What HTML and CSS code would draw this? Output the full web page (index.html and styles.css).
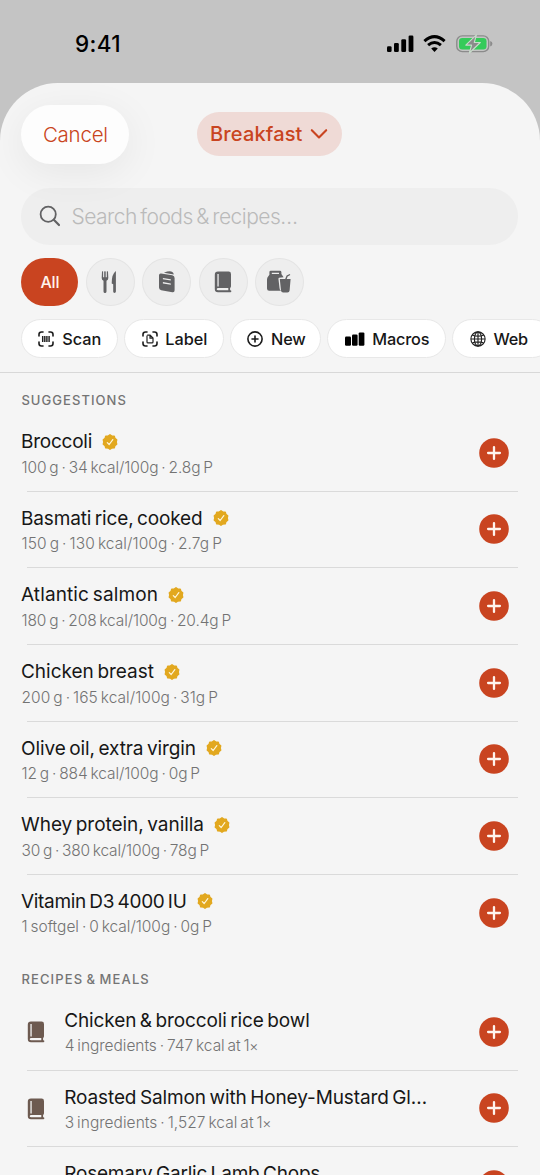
FILE: index.html
```html
<!DOCTYPE html>
<html lang="en">
<head>
<meta charset="utf-8">
<title>Add food</title>
<link rel="stylesheet" href="styles.css">
</head>
<body>
<svg class="defs" aria-hidden="true">
  <symbol id="badge" viewBox="0 0 16 16">
    <path fill="#e2a81f" stroke="#e2a81f" stroke-width="1.6" stroke-linejoin="round" d="M8 .9 9.8 2.1 12.2 2.2 12.8 4.4 14.6 5.8 14.1 8 14.6 10.2 12.8 11.6 12.2 13.8 9.8 13.9 8 15.1 6.2 13.9 3.8 13.8 3.2 11.6 1.4 10.2 1.9 8 1.4 5.8 3.2 4.4 3.8 2.2 6.2 2.1Z"/>
    <path fill="none" stroke="#fff6dc" stroke-width="1.2" stroke-linecap="round" stroke-linejoin="round" d="M5.3 8.6 7.2 10.5 10.8 5.6"/>
  </symbol>
  <symbol id="book" viewBox="0 0 18 22">
    <path fill="currentColor" fill-rule="evenodd" d="M4 .6H14.6Q17 .6 17 3V15.2Q17 16.6 16.1 16.9V19.3H16.4A.9.9 0 0 1 16.4 21.2H4Q.8 21.2 .8 18V3.8Q.8 .6 4 .6ZM3.4 3V15.6H4.7V3ZM4.3 17.1Q2.7 17.1 2.7 18.2T4.3 19.3H14.3V17.1Z"/>
  </symbol>
  <symbol id="plus" viewBox="0 0 30 30">
    <circle cx="15" cy="15" r="14.8" fill="#c94420"/>
    <path d="M15 9.1V20.9M9.1 15H20.9" fill="none" stroke="#fff4ee" stroke-width="2.3" stroke-linecap="round"/>
  </symbol>
</svg>

<header class="status">
  <span class="time" data-w="46">9:41</span>
  <svg class="status-icons" width="108" height="20" viewBox="0 0 108 20">
    <g><rect x="1" y="12.3" width="4.6" height="5.7" rx="1.3"/><rect x="8" y="9" width="4.8" height="9" rx="1.3"/><rect x="15.3" y="5.3" width="4.8" height="12.7" rx="1.3"/><rect x="22.6" y="1.5" width="4.8" height="16.5" rx="1.3"/></g>
    <g fill="none" stroke="#000" stroke-width="3"><path d="M38.4 7.1Q48.5-1.9 58.6 7.1"/><path d="M42.1 11.2Q48.5 5.7 54.9 11.2"/></g>
    <path d="M45.2 14.4Q48.5 11.9 51.8 14.4L48.5 17.9Z"/>
    <rect x="70.8" y="1.9" width="31.9" height="15.7" rx="5.4" fill="none" stroke="#8b8b8b" stroke-width="1.4"/>
    <rect x="73" y="4" width="27.5" height="11.5" rx="3.3" fill="#35cb5a"/>
    <path d="M104.2 7Q106.4 7.6 106.4 9.8T104.2 12.6Z" fill="#8b8b8b"/>
    <path d="M90.4 .9 79.8 11.1H85.6L83.4 19 94.3 8.5H88.3Z" fill="#8b8b8b" stroke="#c8dccb" stroke-width="1.1" stroke-linejoin="round"/>
  </svg>
</header>

<main class="sheet">
  <div class="toolbar">
    <button class="cancel"><span data-w="65">Cancel</span></button>
    <button class="meal"><span data-w="92.5">Breakfast</span>
      <svg width="18" height="12" viewBox="0 0 18 12"><path d="M1.8 2.2 9 9.5 16.2 2.2" fill="none" stroke="#c94420" stroke-width="2.1" stroke-linecap="round" stroke-linejoin="round"/></svg>
    </button>
  </div>

  <div class="search">
    <svg width="22" height="22" viewBox="0 0 22 22"><g fill="none" stroke="#626264" stroke-width="1.8" stroke-linecap="round"><circle cx="9.2" cy="9.2" r="7.6"/><path d="M14.8 14.8 20 20" stroke-width="2.2"/></g></svg>
    <span data-w="226">Search foods &amp; recipes…</span>
  </div>

  <div class="filters">
    <span class="all"><span data-w="19">All</span></span>
    <span class="round"><svg width="18" height="24" viewBox="0 0 18 24" fill="currentColor"><path d="M1 1.6Q1.6.8 2.1 1.6V7.2H3.2V1.6Q4 .8 4.7 1.6V7.2H5.8V1.6Q6.4.8 7 1.6L7.3 8Q7.3 10 5.5 10.8V21.4Q5.4 23 4 23T2.5 21.4V10.8Q.7 10 .7 8Z"/><path d="M14.9 1V21.6Q14.8 23 13.5 23T12.2 21.6V14.3L10.7 13.5Q10.6 4 14.9 1Z"/></svg></span>
    <span class="round"><svg width="18" height="24" viewBox="0 0 18 24" fill="currentColor"><path fill-rule="evenodd" d="M3 3.4 14.3 5.3Q16.6 5.8 16.6 8V20.2Q16.6 22.6 14.4 22.2L3.2 20.2Q1 19.7 1 17.5V5.2Q1.1 3.2 3 3.4ZM4.9 8V9.3L12.8 10.6V9.3ZM4.9 12.1V13.4L12.8 14.7V13.4Z"/><path d="M5.9 2.7Q11.8.3 14.3 1.9 15.6 2.8 15.8 4.5Z"/></svg></span>
    <span class="round"><svg width="18" height="22"><use href="#book"/></svg></span>
    <span class="round"><svg width="26" height="24" viewBox="0 0 26 24" fill="currentColor"><path fill-rule="evenodd" d="M4.7.7H14Q15.2.7 15.4 2V4.1L17.6 7.3 13 7.8Q12.3 8 12.5 9.4L13.5 18Q13.7 20.8 15.2 20.8H3.2Q1 20.8 1 18.5V9.5Q1 7.8 2.3 6.2L3.4 4.7V2Q3.5.7 4.7.7ZM5.8 2.7V3.9H13V2.7Z"/><path d="M13.8 9H19.2L20.6 5.5 23.8 3.9 24.3 5 21.6 6.4 20.7 9H24.6L23.6 20.5Q23.4 22.6 21.4 22.6H17.2Q15.2 22.6 15 20.5Z"/></svg></span>
  </div>

  <div class="actions">
    <span class="chip scan"><svg width="16" height="16" viewBox="0 0 16 16"><path class="ln" d="M1 5V3.5Q1 1 3.5 1H5M11 1h1.5Q15 1 15 3.5V5M15 11v1.5Q15 15 12.5 15H11M5 15H3.5Q1 15 1 12.5V11"/><path d="M4.7 5V11M6.8 5V11M8.9 5V11M11.1 5V11" stroke="#222" stroke-width="1.45"/></svg><span data-w="39">Scan</span></span>
    <span class="chip label"><svg width="16" height="16" viewBox="0 0 16 16"><path class="ln" d="M1 5V3.5Q1 1 3.5 1H5M11 1h1.5Q15 1 15 3.5V5M15 11v1.5Q15 15 12.5 15H11M5 15H3.5Q1 15 1 12.5V11"/><path d="M5.2 4.1H8.1L11 7V10.9Q11 11.9 10 11.9H6Q5 11.9 5 10.9V4.5M8 4.3V7.2H11" fill="none" stroke="#222" stroke-width="1.2"/></svg><span data-w="42">Label</span></span>
    <span class="chip new"><svg width="16" height="16" viewBox="0 0 16 16"><g class="ln"><circle cx="8" cy="8" r="7.1"/><path d="M8 5V11M5 8H11"/></g></svg><span data-w="34.5">New</span></span>
    <span class="chip macros"><svg width="20" height="16" viewBox="0 0 20 16"><rect x="0" y="5.5" width="6" height="9.2" rx="1.2"/><rect x="7" y="3.5" width="5.6" height="11.2" rx="1.2"/><rect x="13.7" y="1.4" width="5.7" height="13.3" rx="1.2"/></svg><span data-w="57">Macros</span></span>
    <span class="chip web"><svg width="16" height="16" viewBox="0 0 16 16"><g fill="none" stroke="#222" stroke-width="1.15"><circle cx="8" cy="8" r="7.1"/><ellipse cx="8" cy="8" rx="3.6" ry="7.1"/><path d="M8 1V15M1 8H15M2.4 4.2Q8 6.2 13.6 4.2M2.4 11.8Q8 9.8 13.6 11.8"/></g></svg><span data-w="34.5">Web</span></span>
  </div>

  <section class="list">
    <h2><span data-w="105.5">SUGGESTIONS</span></h2>
    <article class="row"><div class="info"><h3><span data-w="71">Broccoli</span><svg><use href="#badge"/></svg></h3><p><span data-w="191.5">100 g · 34 kcal/100g · 2.8g P</span></p></div><svg class="add"><use href="#plus"/></svg></article>
    <article class="row"><div class="info"><h3><span data-w="181.5">Basmati rice, cooked</span><svg><use href="#badge"/></svg></h3><p><span data-w="200.5">150 g · 130 kcal/100g · 2.7g P</span></p></div><svg class="add"><use href="#plus"/></svg></article>
    <article class="row"><div class="info"><h3><span data-w="137">Atlantic salmon</span><svg><use href="#badge"/></svg></h3><p><span data-w="209.5">180 g · 208 kcal/100g · 20.4g P</span></p></div><svg class="add"><use href="#plus"/></svg></article>
    <article class="row"><div class="info"><h3><span data-w="133">Chicken breast</span><svg><use href="#badge"/></svg></h3><p><span data-w="196.5">200 g · 165 kcal/100g · 31g P</span></p></div><svg class="add"><use href="#plus"/></svg></article>
    <article class="row"><div class="info"><h3><span data-w="175">Olive oil, extra virgin</span><svg><use href="#badge"/></svg></h3><p><span data-w="178.5">12 g · 884 kcal/100g · 0g P</span></p></div><svg class="add"><use href="#plus"/></svg></article>
    <article class="row"><div class="info"><h3><span data-w="183">Whey protein, vanilla</span><svg><use href="#badge"/></svg></h3><p><span data-w="187.5">30 g · 380 kcal/100g · 78g P</span></p></div><svg class="add"><use href="#plus"/></svg></article>
    <article class="row"><div class="info"><h3><span data-w="165.5">Vitamin D3 4000 IU</span><svg><use href="#badge"/></svg></h3><p><span data-w="190.5">1 softgel · 0 kcal/100g · 0g P</span></p></div><svg class="add"><use href="#plus"/></svg></article>
  </section>

  <section class="list recipes">
    <h2><span data-w="128.5">RECIPES &amp; MEALS</span></h2>
    <article class="row"><svg class="thumb"><use href="#book"/></svg><div class="info"><h3><span data-w="245.5">Chicken &amp; broccoli rice bowl</span></h3><p><span data-w="185">4 ingredients · 747 kcal at 1</span><small>×</small></p></div><svg class="add"><use href="#plus"/></svg></article>
    <article class="row"><svg class="thumb"><use href="#book"/></svg><div class="info"><h3><span data-w="363">Roasted Salmon with Honey-Mustard Gl…</span></h3><p><span data-w="198">3 ingredients · 1,527 kcal at 1</span><small>×</small></p></div><svg class="add"><use href="#plus"/></svg></article>
    <article class="row"><svg class="thumb"></svg><div class="info"><h3><span data-w="256">Rosemary Garlic Lamb Chops</span></h3></div><svg class="add"><use href="#plus"/></svg></article>
  </section>
</main>
<script src="tracking.js"></script>
</body>
</html>
```
FILE: styles.css
```css
* { box-sizing: border-box; }
html, body { margin: 0; height: 1175px; overflow: hidden; }
body { background: #c4c4c4; font-family: Inter, "Open Sans", sans-serif; color: #171717; display: flex; flex-direction: column; }
.defs { display: none; }
svg { display: block; flex: none; }
[data-w] { white-space: nowrap; flex: none; word-spacing: -0.09em; }
button { font: inherit; border: 0; padding: 0; }

.status { height: 83.4px; flex: none; display: flex; justify-content: space-between; padding: 34px 46px 0 75px; }
.time { font-size: 22.5px; font-weight: 550; line-height: 20px; color: #000; }

.sheet { height: 1091.6px; flex: none; overflow: hidden; background: #f5f5f5; border-radius: 58px 58px 0 0; }
.toolbar { display: flex; align-items: center; height: 104.8px; padding: 0 21.4px; gap: 67.4px; }
.cancel { width: 108px; height: 59px; margin-top: -3px; border-radius: 30px; background: #fdfdfd; box-shadow: 0 8px 40px rgba(0,0,0,.065); color: #c94420; font-size: 20.5px; font-weight: 350; }
.meal { width: 145.5px; height: 44px; margin-top: -3px; border-radius: 22px; background: #efdad6; color: #c94420; font-size: 20px; font-weight: 500; display: flex; align-items: center; gap: 7px; padding-left: 13.3px; }

.search { margin: 0 21.6px 0 21.4px; height: 56.5px; border-radius: 28.5px; background: #eee; display: flex; align-items: center; gap: 10.6px; padding-left: 17.5px; color: #bababa; font-size: 21px; font-weight: 300; }

.filters { display: flex; gap: 7.4px; padding: 13.2px 21.4px 0; }
.all { width: 57px; height: 48.5px; border-radius: 25px; background: #c94420; color: #fff4ee; font-size: 16px; font-weight: 480; display: grid; place-items: center; }
.round { width: 49px; height: 48.5px; border-radius: 50%; background: #eee; border: 1px solid #e4e4e4; color: #626264; display: grid; place-items: center; }

.actions { display: flex; gap: 6.2px; padding: 13px 0 13.5px 21.2px; border-bottom: 1px solid #d8d8d8; }
.chip { height: 39px; flex: none; border: 1px solid #e8e8e8; border-radius: 20px; background: #fff; display: flex; align-items: center; gap: 7.7px; padding-left: 16.3px; font-size: 16.3px; font-weight: 480; }
.ln { fill: none; stroke: #1c1c1c; stroke-width: 1.6; stroke-linecap: round; }
.scan { width: 97px; }
.label { width: 99.5px; }
.new { width: 91px; }
.macros { width: 119px; }
.web { width: 100px; }

.list h2 { margin: 0; height: 42.4px; padding: 18.2px 0 0 21.4px; font-size: 13px; line-height: 18px; font-weight: 500; color: #747474; }
.row { height: 76.62px; margin: 0 22px 0 21px; display: flex; align-items: center; padding-right: 9.2px; background: linear-gradient(#dadada, #dadada) 5.5px 100% / 100% 1px no-repeat; }
.list:not(.recipes) .row:last-child { background: none; }
.info { flex: 1; align-self: flex-start; padding-top: 13.5px; }
.info h3 { margin: 0; height: 26px; display: flex; align-items: center; gap: 10px; font-size: 19px; font-weight: 400; }
.info h3 svg { width: 16px; height: 16px; }
.info p { margin: 0 0 0 .5px; height: 25px; display: flex; align-items: center; font-size: 15.5px; font-weight: 310; color: #737373; }
.info small { font-size: 14px; margin-left: -.5px; }
.add { width: 30px; height: 30px; margin-bottom: 1.4px; }
.thumb { width: 18px; height: 22px; margin: 0 19px 0 6.2px; color: #6d5a50; }
```
FILE: tracking.js
```js
// Adjusts letter tracking so each label spans its design width.
document.querySelectorAll("[data-w]").forEach((el) => {
  const range = document.createRange();
  range.selectNodeContents(el);
  const natural = range.getBoundingClientRect().width;
  const gap = (parseFloat(el.dataset.w) - natural) / el.textContent.length;
  el.style.letterSpacing = gap.toFixed(3) + "px";
});
```
